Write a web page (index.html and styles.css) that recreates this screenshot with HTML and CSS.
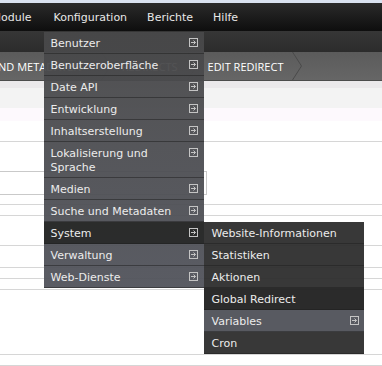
FILE: index.html
```html
<!DOCTYPE html>
<html lang="de">
<head>
  <meta charset="UTF-8" />
  <title>Edit redirect</title>
  <link rel="stylesheet" href="styles.css">
</head>
<body>
  <div class="strip"></div>

  <div class="topbar">
    <ul class="main-nav">
      <li>Module</li>
      <li class="open">Konfiguration
        <ul class="dropdown">
          <li><span>Benutzer</span><svg class="arr" width="9" height="9" viewBox="0 0 9 9"><rect x="0.5" y="0.5" width="8" height="8"/><path d="M2 4.5h4.5M4.5 2.5l2 2-2 2"/></svg></li>
          <li><span>Benutzeroberfläche</span><svg class="arr" width="9" height="9" viewBox="0 0 9 9"><rect x="0.5" y="0.5" width="8" height="8"/><path d="M2 4.5h4.5M4.5 2.5l2 2-2 2"/></svg></li>
          <li><span>Date API</span><svg class="arr" width="9" height="9" viewBox="0 0 9 9"><rect x="0.5" y="0.5" width="8" height="8"/><path d="M2 4.5h4.5M4.5 2.5l2 2-2 2"/></svg></li>
          <li><span>Entwicklung</span><svg class="arr" width="9" height="9" viewBox="0 0 9 9"><rect x="0.5" y="0.5" width="8" height="8"/><path d="M2 4.5h4.5M4.5 2.5l2 2-2 2"/></svg></li>
          <li><span>Inhaltserstellung</span><svg class="arr" width="9" height="9" viewBox="0 0 9 9"><rect x="0.5" y="0.5" width="8" height="8"/><path d="M2 4.5h4.5M4.5 2.5l2 2-2 2"/></svg></li>
          <li><span>Lokalisierung und Sprache</span><svg class="arr" width="9" height="9" viewBox="0 0 9 9"><rect x="0.5" y="0.5" width="8" height="8"/><path d="M2 4.5h4.5M4.5 2.5l2 2-2 2"/></svg></li>
          <li><span>Medien</span><svg class="arr" width="9" height="9" viewBox="0 0 9 9"><rect x="0.5" y="0.5" width="8" height="8"/><path d="M2 4.5h4.5M4.5 2.5l2 2-2 2"/></svg></li>
          <li><span>Suche und Metadaten</span><svg class="arr" width="9" height="9" viewBox="0 0 9 9"><rect x="0.5" y="0.5" width="8" height="8"/><path d="M2 4.5h4.5M4.5 2.5l2 2-2 2"/></svg></li>
          <li class="active"><span>System</span><svg class="arr" width="9" height="9" viewBox="0 0 9 9"><rect x="0.5" y="0.5" width="8" height="8"/><path d="M2 4.5h4.5M4.5 2.5l2 2-2 2"/></svg>
            <ul class="submenu">
              <li><span>Website-Informationen</span></li>
              <li><span>Statistiken</span></li>
              <li><span>Aktionen</span></li>
              <li class="current"><span>Global Redirect</span></li>
              <li class="trail"><span>Variables</span><svg class="arr" width="9" height="9" viewBox="0 0 9 9"><rect x="0.5" y="0.5" width="8" height="8"/><path d="M2 4.5h4.5M4.5 2.5l2 2-2 2"/></svg></li>
              <li><span>Cron</span></li>
            </ul>
          </li>
          <li><span>Verwaltung</span><svg class="arr" width="9" height="9" viewBox="0 0 9 9"><rect x="0.5" y="0.5" width="8" height="8"/><path d="M2 4.5h4.5M4.5 2.5l2 2-2 2"/></svg></li>
          <li><span>Web-Dienste</span><svg class="arr" width="9" height="9" viewBox="0 0 9 9"><rect x="0.5" y="0.5" width="8" height="8"/><path d="M2 4.5h4.5M4.5 2.5l2 2-2 2"/></svg></li>
        </ul>
      </li>
      <li>Berichte</li>
      <li>Hilfe</li>
    </ul>
  </div>

  <div class="subbar"></div>

  <div class="crumbs">
    <span class="crumb">Suche und Metadaten</span>
    <svg class="chev" width="10" height="28" viewBox="0 0 10 28"><path d="M0.5 0l9 14-9 14"/></svg>
    <span class="crumb">Redirects</span>
    <svg class="chev" width="10" height="28" viewBox="0 0 10 28"><path d="M0.5 0l9 14-9 14"/></svg>
    <span class="crumb">Edit redirect</span>
    <svg class="chev" width="10" height="28" viewBox="0 0 10 28"><path d="M0.5 0l9 14-9 14"/></svg>
  </div>

  <div class="content">
    <div class="band band-1"></div>
    <div class="band band-2"></div>
    <div class="band band-3"></div>
    <div class="row" style="height: 20px"></div>
    <div class="row field">
      <div class="input"></div>
    </div>
    <div class="row" style="height: 10px"></div>
    <div class="row" style="height: 29px"></div>
    <div class="row" style="height: 21px"></div>
    <div class="row" style="height: 10px"></div>
    <div class="row" style="height: 10px"></div>
    <div class="row" style="height: 64px"></div>
    <div class="row" style="height: 10px"></div>
  </div>
</body>
</html>
```

FILE: styles.css
```css
body {
  margin: 0;
  font-family: "DejaVu Sans", Verdana, sans-serif;
  font-size: 11px;
  background: #fff;
  overflow: hidden;
}

ul {
  list-style: none;
  margin: 0;
  padding: 0;
}

.strip {
  height: 3px;
  background: #d9e1ef;
}

.topbar {
  height: 28px;
  background: linear-gradient(#2a2a2a, #0e0e0e);
}

.main-nav {
  display: flex;
  margin-left: -18.5px;
}

.main-nav > li {
  position: relative;
  padding: 0 10px;
  line-height: 29px;
  color: #e8e8e8;
  white-space: nowrap;
}

.main-nav > li:first-child {
  padding-right: 12px;
}

.subbar {
  height: 21px;
  background: linear-gradient(#363636, #2c2c2c);
}

.crumbs {
  display: flex;
  align-items: center;
  height: 28px;
  margin-left: -59px;
  background: linear-gradient(#5b5b5b, #666);
  border-bottom: 1px solid #4c4c4c;
  font-family: "Open Sans", sans-serif;
  font-size: 11px;
  color: #fff;
  text-transform: uppercase;
  white-space: nowrap;
}

.crumb {
  padding: 0 9px 0 11px;
}

.crumb:first-child {
  padding-right: 19px;
}

.chev {
  flex: none;
}

.chev path {
  fill: none;
  stroke: #4a4a4a;
  stroke-width: 1;
}

/* dropdown */
.dropdown {
  position: absolute;
  left: 0;
  top: 29px;
  width: 160px;
  line-height: 14px;
  background: linear-gradient(rgba(72, 72, 73, 0.95), rgba(81, 83, 91, 0.95));
  z-index: 10;
}

.dropdown li,
.submenu li {
  position: relative;
  display: flex;
  align-items: flex-start;
  gap: 10px;
  padding: 5px 6px 2px 7px;
  border-bottom: 1px solid rgba(30, 30, 30, 0.5);
  color: #ececec;
  white-space: normal;
}

.dropdown li span,
.submenu li span {
  flex: 1;
}

.dropdown li.active {
  background: rgba(40, 41, 40, 0.94);
}

.arr {
  flex: none;
  margin-top: 1px;
}

.arr rect,
.arr path {
  fill: none;
  stroke: #c4c4c4;
  stroke-width: 1;
}

.submenu {
  position: absolute;
  left: 160px;
  top: 0;
  width: 160px;
  background: rgba(45, 45, 45, 0.95);
}

.submenu li {
  padding-left: 8px;
  padding-right: 5px;
}

.submenu li.current {
  background: rgba(10, 10, 10, 0.28);
}

.submenu li.trail {
  background: rgba(90, 92, 99, 0.97);
}

/* page behind the menu */
.band-1 {
  height: 7px;
  background: #ebe9eb;
}

.band-2 {
  height: 20px;
  background: #f3f3f3;
}

.band-3 {
  height: 13px;
  background: #fdf9fd;
}

.row {
  border-bottom: 1px solid #d6d6d6;
}

.field {
  padding: 29px 0 9px;
}

.input {
  width: 217px;
  height: 22px;
  margin-left: -12px;
  border: 1px solid #c9c9c9;
}
```
